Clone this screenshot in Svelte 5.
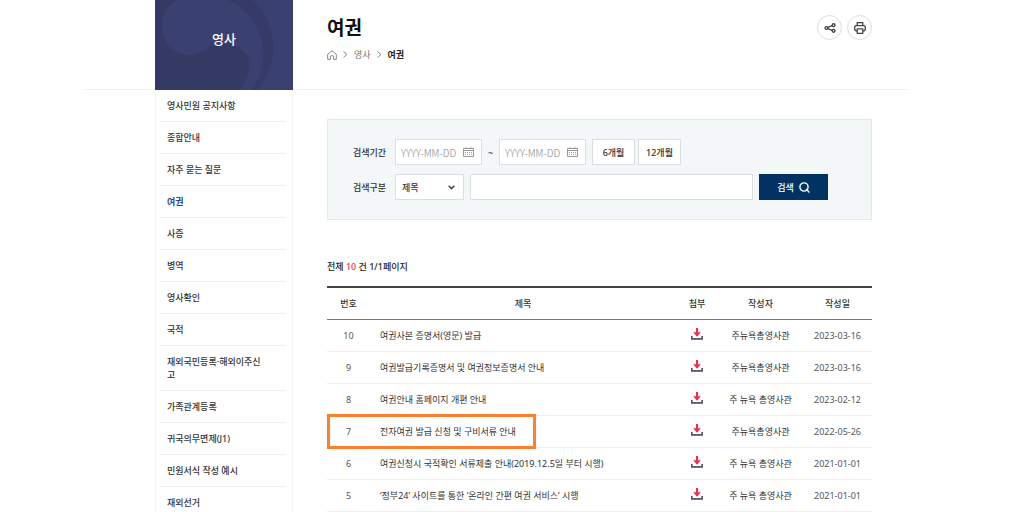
<script lang="ts">
	type Post = { no: number; title: string; author: string; date: string; marked?: boolean };

	const menu = [
		'영사민원 공지사항',
		'종합안내',
		'자주 묻는 질문',
		'여권',
		'사증',
		'병역',
		'영사확인',
		'국적',
		'재외국민등록·해외이주신고',
		'가족관계등록',
		'귀국의무면제(J1)',
		'민원서식 작성 예시',
		'재외선거'
	];

	const posts: Post[] = [
		{ no: 10, title: '여권사본 증명서(영문) 발급', author: '주뉴욕총영사관', date: '2023-03-16' },
		{ no: 9, title: '여권발급기록증명서 및 여권정보증명서 안내', author: '주뉴욕총영사관', date: '2023-03-16' },
		{ no: 8, title: '여권안내 홈페이지 개편 안내', author: '주 뉴욕 총영사관', date: '2023-02-12' },
		{ no: 7, title: '전자여권 발급 신청 및 구비서류 안내', author: '주뉴욕총영사관', date: '2022-05-26', marked: true },
		{ no: 6, title: '여권신청시 국적확인 서류제출 안내(2019.12.5일 부터 시행)', author: '주 뉴욕 총영사관', date: '2021-01-01' },
		{ no: 5, title: '‘정부24’ 사이트를 통한 ‘온라인 간편 여권 서비스’ 시행', author: '주 뉴욕 총영사관', date: '2021-01-01' }
	];

	let current = $state('여권');
	let from = $state('');
	let to = $state('');
	let field = $state('제목');
	let keyword = $state('');
</script>

{#snippet calendar()}
	<svg width="11" height="11" viewBox="0 0 11 11" fill="none" stroke="#999" aria-hidden="true">
		<path d="M.5 1.5h10v8H.5zM.5 3.5h10M3 0v2M8 0v2" />
		<path d="M2 5.5h7M2 7.5h7" stroke-dasharray="1 1" />
	</svg>
{/snippet}

<div class="page">
	<header>
		<div class="banner">
			<svg viewBox="0 0 138 90" preserveAspectRatio="none" aria-hidden="true">
				<rect width="138" height="90" fill="#3a4170" />
				<path d="M0 0h22C12 6 6 16 7 28C9 46 20 55 35 55C50 54 53 43 70 43C86 44 95 54 94 66C93 77 90 84 84 90H0z" fill="#343a63" />
				<path d="M72 0h26C112 14 119 30 118 50C117 68 110 82 102 90H96C106 78 110 62 108 46C104 22 90 8 72 0z" fill="#353b66" />
			</svg>
			<strong>영사</strong>
		</div>
		<div class="heading">
			<div>
				<h1>여권</h1>
				<nav class="crumbs" aria-label="현재 위치">
					<a href="#home" aria-label="홈">
						<svg width="10" height="10" viewBox="0 0 10 10" fill="none" stroke="#888" stroke-linejoin="round">
							<path d="M.7 4.3 5 .7l4.3 3.6v5H6.5V7a1.5 1.5 0 0 0-3 0v2.3H.7z" />
						</svg>
					</a>
					<svg width="5" height="7" viewBox="0 0 5 7" fill="none" stroke="#888"><path d="m.5.5 3.5 3-3.5 3" /></svg>
					<a href="#consular">영사</a>
					<svg width="5" height="7" viewBox="0 0 5 7" fill="none" stroke="#888"><path d="m.5.5 3.5 3-3.5 3" /></svg>
					<b>여권</b>
				</nav>
			</div>
			<div class="tools">
				<button type="button" aria-label="공유">
					<svg width="12" height="12" viewBox="0 0 12 12" fill="none" stroke="#444" stroke-width="1.4">
						<circle cx="2.4" cy="6" r="1.4" /><circle cx="9.6" cy="3.2" r="1.4" /><circle cx="9.6" cy="8.8" r="1.4" />
						<path d="m3.8 5.4 4.4-1.7M3.8 6.6l4.4 1.7" />
					</svg>
				</button>
				<button type="button" aria-label="인쇄">
					<svg width="12" height="12" viewBox="0 0 12 12" fill="none" stroke="#444" stroke-width="1.3" stroke-linejoin="round">
						<path d="M3.2 3.6v-3h5.6v3M3.2 8.8H1.8L.7 7.8V4.7l1.1-1.1h8.4l1.1 1.1v3.1l-1.1 1H8.8" />
						<path d="M3.2 6.8h5.6v4.5H3.2z" />
					</svg>
				</button>
			</div>
		</div>
	</header>

	<div class="body">
		<nav class="side" aria-label="영사">
			<ul>
				{#each menu as item}
					<li>
						<a href="#menu" class:active={item === current} onclick={() => (current = item)}>{item}</a>
					</li>
				{/each}
			</ul>
		</nav>

		<main>
			<form class="search" onsubmit={(e) => e.preventDefault()}>
				<div class="line">
					<label for="from">검색기간</label>
					<span class="date">
						<input id="from" type="text" placeholder="YYYY-MM-DD" bind:value={from} />
						{@render calendar()}
					</span>
					<span class="tilde">~</span>
					<span class="date">
						<input type="text" placeholder="YYYY-MM-DD" aria-label="종료일" bind:value={to} />
						{@render calendar()}
					</span>
					<div class="periods">
						<button type="button">6개월</button>
						<button type="button">12개월</button>
					</div>
				</div>
				<div class="line">
					<label for="field">검색구분</label>
					<select id="field" bind:value={field}>
						<option>제목</option>
						<option>내용</option>
					</select>
					<input class="keyword" type="text" aria-label="검색어" bind:value={keyword} />
					<button class="submit" type="submit">
						검색
						<svg width="11" height="11" viewBox="0 0 11 11" fill="none" stroke="#fff" stroke-width="1.4">
							<circle cx="5" cy="5" r="4.1" /><path d="m7 7 3.4 3.4" />
						</svg>
					</button>
				</div>
			</form>

			<p class="count">전체 <em>10</em> 건 1/1페이지</p>

			<table>
				<thead>
					<tr>
						<th class="no">번호</th>
						<th>제목</th>
						<th class="file">첨부</th>
						<th class="author">작성자</th>
						<th class="day">작성일</th>
					</tr>
				</thead>
				<tbody>
					{#each posts as post}
						<tr>
							<td class="num">
								{post.no}
								{#if post.marked}<span class="mark"></span>{/if}
							</td>
							<td class="title"><a href="#post">{post.title}</a></td>
							<td class="download">
								<a href="#file" aria-label="첨부파일">
									<svg width="12" height="12" viewBox="0 0 12 12" fill="none">
										<path d="M.8 8v2.9h10.4V8" stroke="#4d5665" stroke-width="1.6" />
										<path d="M6 0v7" stroke="#ee2c4a" stroke-width="2" />
										<path d="M2.2 4.2 6 8.8l3.8-4.6z" fill="#ee2c4a" />
									</svg>
								</a>
							</td>
							<td>{post.author}</td>
							<td class="num">{post.date}</td>
						</tr>
					{/each}
				</tbody>
			</table>
		</main>
	</div>
</div>

<style>
	:global(body) {
		background: #fff;
		color: #333;
		font-family: 'Noto Sans', 'Noto Sans CJK KR', sans-serif;
		font-size: 9px;
		line-height: 13px;
	}
	.page {
		margin: 0 116px 0 83px;
	}
	a {
		color: inherit;
		text-decoration: none;
	}
	button,
	input,
	select {
		box-sizing: border-box;
		margin: 0;
		border: 1px solid #dcdfe2;
		border-radius: 0;
		background: #fff;
		color: #333;
		font: inherit;
	}
	button {
		cursor: pointer;
	}

	header {
		display: flex;
		gap: 34px;
		padding: 0 36px 0 72px;
		background: linear-gradient(#f2f2f2, #f2f2f2) bottom / 100% 1px no-repeat;
	}
	.banner {
		display: grid;
		flex: none;
		width: 138px;
		height: 90px;
	}
	.banner svg,
	.banner strong {
		grid-area: 1 / 1;
	}
	.banner svg {
		width: 100%;
		height: 100%;
	}
	.banner strong {
		z-index: 1;
		padding-top: 29px;
		color: #fff;
		font-size: 13px;
		font-weight: 500;
		line-height: 20px;
		text-align: center;
	}
	.heading {
		display: flex;
		flex: 1;
		justify-content: space-between;
		padding-top: 15px;
	}
	h1 {
		margin: 0;
		color: #111;
		font-size: 19px;
		font-weight: 700;
		line-height: 26px;
	}
	.crumbs {
		display: flex;
		align-items: center;
		gap: 6px;
		margin-top: 7px;
		color: #777;
	}
	.crumbs a {
		display: flex;
	}
	.crumbs b {
		color: #222;
	}
	.tools {
		display: flex;
		gap: 5px;
	}
	.tools button {
		display: grid;
		place-items: center;
		width: 25px;
		height: 25px;
		padding: 0;
		border-color: #ddd;
		border-radius: 50%;
	}

	.body {
		display: flex;
		align-items: stretch;
		gap: 34px;
		padding: 0 36px 0 72px;
	}
	.side {
		box-sizing: border-box;
		flex: none;
		width: 138px;
		border: solid #f5f5f5;
		border-width: 0 1px;
	}
	ul {
		margin: 0;
		padding: 0 6px 0 5px;
		list-style: none;
	}
	li {
		border-bottom: 1px solid #f0f0f0;
	}
	li a {
		display: block;
		padding: 9px 21px 9px 6px;
		font-weight: 500;
		word-break: break-all;
	}
	li a.active {
		color: #1d4a8c;
		font-weight: 700;
	}

	main {
		flex: 1;
		min-width: 0;
		padding-top: 29px;
	}
	.search {
		display: flex;
		flex-direction: column;
		gap: 9px;
		padding: 19px 43px 19px 25px;
		border: 1px solid #e6e9ea;
		background: #f4f7f8;
	}
	.line {
		display: flex;
		align-items: center;
		gap: 6px;
	}
	label {
		width: 36px;
		font-weight: 500;
		white-space: nowrap;
	}
	.date {
		box-sizing: border-box;
		display: flex;
		align-items: center;
		width: 87px;
		height: 26px;
		padding: 0 7px 0 5px;
		border: 1px solid #dcdfe2;
		background: #fff;
	}
	.date input {
		flex: 1;
		min-width: 0;
		padding: 0;
		border: 0;
		font-family: 'Noto Sans CJK KR', sans-serif;
		font-size: 10px;
		font-weight: 300;
	}
	.date svg {
		flex: none;
	}
	input::placeholder {
		color: #888;
	}
	.tilde {
		width: 5px;
	}
	.periods {
		display: flex;
		gap: 3px;
	}
	.periods button {
		width: 43px;
		height: 26px;
		padding: 0;
		font-weight: 500;
	}
	select {
		width: 69px;
		height: 26px;
		padding: 0 6px;
		appearance: none;
		background: #fff url("data:image/svg+xml,%3Csvg xmlns='http://www.w3.org/2000/svg' width='7' height='5' fill='none' stroke='%23444' stroke-width='1.5'%3E%3Cpath d='m.7.8 2.8 2.8L6.3.8'/%3E%3C/svg%3E") right 8px center no-repeat;
		font-weight: 500;
	}
	.keyword {
		flex: 1;
		min-width: 0;
		height: 26px;
		padding: 0 6px;
	}
	.submit {
		display: flex;
		align-items: center;
		justify-content: center;
		gap: 5px;
		width: 69px;
		height: 26px;
		border: 0;
		background: #003362;
		color: #fff;
		font-weight: 500;
	}

	.count {
		margin: 40px 0 13px;
		color: #222;
		font-weight: 500;
	}
	.count em {
		color: #e8304a;
		font-style: normal;
	}
	table {
		width: 100%;
		border-top: 2px solid #444;
		border-spacing: 0;
		table-layout: fixed;
	}
	th,
	td {
		height: 31px;
		padding: 0;
		border-bottom: 1px solid #eee;
		text-align: center;
	}
	th {
		border-color: #777;
		font-weight: 500;
	}
	td {
		font-weight: 400;
	}
	td svg {
		display: block;
		margin: auto;
	}
	.no {
		width: 43px;
	}
	.file {
		width: 42px;
	}
	.author {
		width: 85px;
	}
	.day {
		width: 69px;
	}
	.num {
		position: relative;
		color: #555;
	}
	.title {
		padding-left: 10px;
		text-align: left;
		white-space: nowrap;
	}
	.download {
		height: 27px;
		padding-bottom: 4px;
	}
	.mark {
		position: absolute;
		top: -2px;
		bottom: -2px;
		left: 0;
		z-index: 1;
		box-sizing: border-box;
		width: 209px;
		border: 3px solid #fb8130;
		pointer-events: none;
	}
</style>
